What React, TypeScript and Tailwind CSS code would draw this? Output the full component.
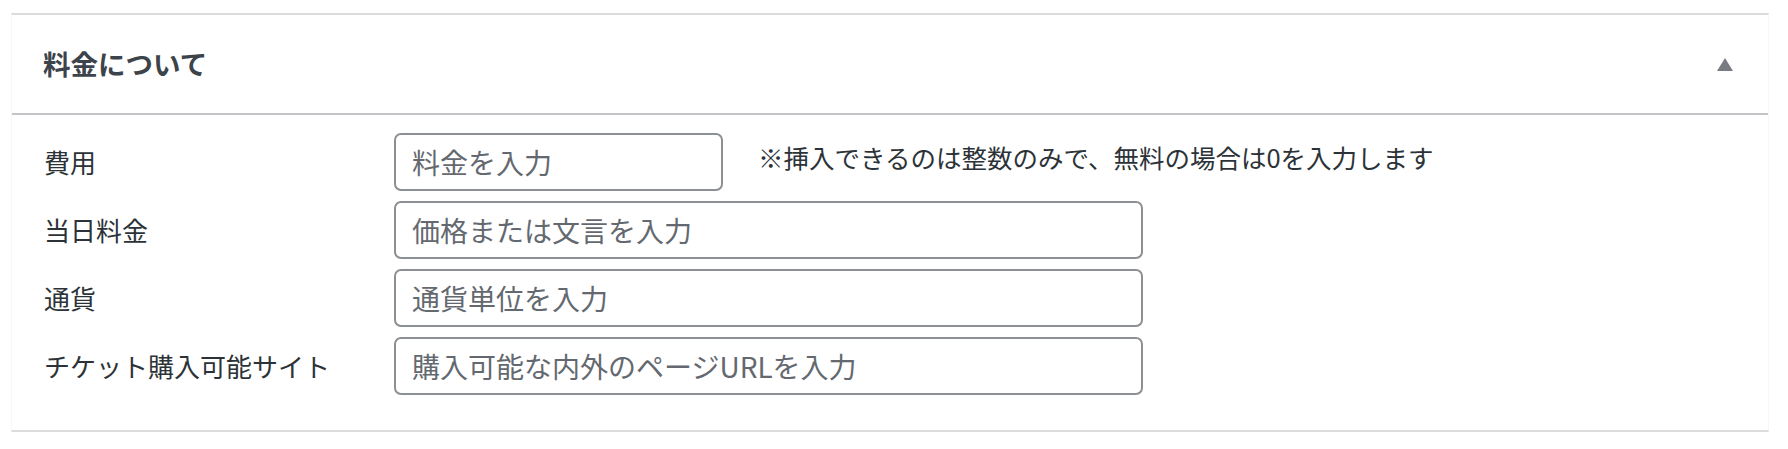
import React from "react";

const font = { fontFamily: '"Noto Sans CJK JP", "Noto Sans", sans-serif' };

function Row({ label, placeholder, wide, hint }: { label: string; placeholder: string; wide?: boolean; hint?: string }) {
  return (
    <div className="flex items-center h-[58px]">
      <div className="w-[382px] pl-[32px] text-[26px] leading-none text-[#2c3338]">{label}</div>
      <input
        type="text"
        placeholder={placeholder}
        className={`${wide ? "w-[749px]" : "w-[329px]"} h-[58px] rounded-[7px] border-2 border-[#8c8f94] bg-white px-[16px] text-[28px] text-[#2c3338] placeholder:text-[#646970] outline-none`}
        style={font}
      />
      {hint && (
        <div className="ml-[35px] self-start mt-[6px] text-[25.5px] leading-[36px] text-[#2c3338]">{hint}</div>
      )}
    </div>
  );
}

export default function App() {
  return (
    <div className="w-[1788px] h-[449px] bg-white pt-[13px] pl-[11px]" style={font}>
      <div className="w-[1758px] bg-white border-t-2 border-b-2 border-t-[#dcdcde] border-b-[#dcdcde] border-x border-x-[#f6f7f7]">
        <div className="h-[100px] border-b-2 border-[#c3c4c7] flex items-center justify-between pl-[31px] pr-[35px]">
          <h2 className="text-[27.5px] font-bold text-[#3c434a] leading-none">料金について</h2>
          <svg width="16" height="13" viewBox="0 0 16 13" aria-hidden="true">
            <polygon points="8,0 16,13 0,13" fill="#787c82" />
          </svg>
        </div>
        <div className="flex flex-col gap-[10px] pt-[18px] pb-[35px]">
          <Row label="費用" placeholder="料金を入力" hint="※挿入できるのは整数のみで、無料の場合は0を入力します" />
          <Row label="当日料金" placeholder="価格または文言を入力" wide />
          <Row label="通貨" placeholder="通貨単位を入力" wide />
          <Row label="チケット購入可能サイト" placeholder="購入可能な内外のページURLを入力" wide />
        </div>
      </div>
    </div>
  );
}
